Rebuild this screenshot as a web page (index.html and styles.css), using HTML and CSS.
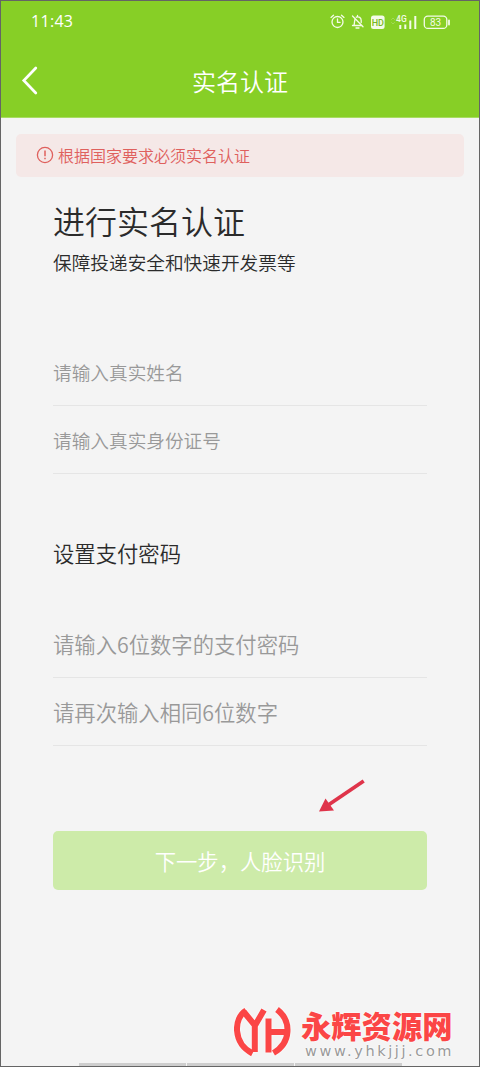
FILE: index.html
```html
<!DOCTYPE html>
<html lang="zh-CN">
<head>
<meta charset="utf-8">
<title>实名认证</title>
<link rel="stylesheet" href="styles.css">
</head>
<body>
<div class="screen">
  <header class="header">
    <div class="status">
      <span class="time">11:43</span>
      <div class="status-icons">
        <svg width="130" height="20" viewBox="0 0 130 20" fill="none" stroke="#f4fbe8" stroke-width="1.3" stroke-linecap="round">
          <circle cx="7.5" cy="11" r="5.5"/><path d="M7.5 8v3.300h2.600M1 6.400 3.500 4.200M14 6.400l-2.500-2.200"/>
          <path d="M22.500 14.500h9.500M24 14c.7-1.500.2-4.500 1.300-6.300M26.300 6.200c2.500-1.200 4.900.6 4.900 3.300v2M27.500 5.500v-1M26 17h3M22.500 5l10.500 10.800"/>
          <rect x="41" y="4.500" width="13.600" height="13.500" rx="2.500" fill="#f4fbe8" stroke="none"/>
          <path d="M70.300 18v-4M75.300 18v-4.500M80.300 18V9.500M85.300 18V5" stroke-width="2" stroke-linecap="butt"/>
          <path d="M61.500 8.500 63 7l1.500 1.500M61.500 11.500l1.500 1.500 1.500-1.500" stroke-width="1" opacity=".25"/>
          <rect x="94.300" y="5.100" width="22.500" height="12.300" rx="3.500"/>
          <path d="M119 9.500v4" stroke-width="1.800"/>
          <text class="icon-text hd" x="47.800" y="14.800">HD</text>
          <text class="icon-text net" x="71.400" y="11">4G</text>
          <text class="icon-text level" x="105.500" y="14.900">83</text>
        </svg>
      </div>
    </div>
    <div class="nav">
      <svg class="back" width="18" height="30" viewBox="0 0 18 30" fill="none" stroke="#fff" stroke-width="2.700" stroke-linecap="round"><path d="M14.800 2 2.800 14.500l12 12.500"/></svg>
      <h1 class="title">实名认证</h1>
    </div>
  </header>

  <div class="alert">
    <svg width="18" height="18" viewBox="0 0 18 18" fill="none" stroke="#df605d" stroke-width="1.300"><circle cx="9" cy="9" r="7.600"/><path d="M9 4.500v5.700M9 11.800v1.500" stroke-width="1.500"/></svg>
    <span>根据国家要求必须实名认证</span>
  </div>

  <main class="form">
    <h2 class="heading">进行实名认证</h2>
    <p class="subtitle">保障投递安全和快速开发票等</p>
    <div class="fields identity">
      <div class="field">请输入真实姓名</div>
      <div class="field">请输入真实身份证号</div>
    </div>
    <h3 class="section">设置支付密码</h3>
    <div class="fields password">
      <div class="field">请输入6位数字的支付密码</div>
      <div class="field">请再次输入相同6位数字</div>
    </div>
    <svg class="arrow" width="50" height="36" viewBox="0 0 50 36"><path d="M45.700 3 11 26.500" stroke="#df344a" stroke-width="3.800" fill="none"/><path d="M1 33.500 7.500 20.500l8.500 12z" fill="#df344a"/></svg>
    <button class="next">下一步，人脸识别</button>
  </main>

  <div class="dock"><i></i><i></i><i></i></div>

  <div class="watermark">
    <svg width="58" height="52" viewBox="0 0 58 52" fill="none" stroke="#fb4646" stroke-width="6">
      <path d="M12 4.500C-.5 12-1.500 37 18.500 47.500M43 3.500C58 15 57 37 39.500 47"/>
      <path d="M9.500 5.500 21 19.500 30 4M20.800 18v28M34.500 12.500v34M34.500 26h18"/>
    </svg>
    <div class="brand">
      <div class="brand-name">永辉资源网</div>
      <div class="brand-url">www.yhkjjj.com</div>
    </div>
  </div>
</div>
</body>
</html>
```
FILE: styles.css
```css
* { box-sizing: border-box; margin: 0; padding: 0; }
body { font-family: "Noto Sans CJK SC", sans-serif; font-weight: 350; background: #f4f4f4; }
svg { display: block; flex: none; }
h1, h2, h3 { font-weight: 350; }
.screen {
  position: relative;
  display: flex;
  flex-direction: column;
  width: 480px;
  height: 1067px;
  overflow: hidden;
  border: 1px solid #656565;
  background: #f4f4f4;
}
.header { height: 117px; background: #87cf26; color: #fff; border-bottom: 1px solid #a8dc62; }
.status { display: flex; justify-content: space-between; height: 40px; padding: 10px 19px 0 30px; }
.time { font: 400 16px/20px "Open Sans", sans-serif; letter-spacing: .3px; }
.icon-text { fill: #f4fbe8; stroke: none; text-anchor: middle; font-family: Roboto, sans-serif; font-weight: 500; }
.hd { font-size: 9px; fill: #77b922; }
.net { font-size: 8.500px; }
.level { font-size: 10px; font-weight: 400; }
.nav { display: flex; align-items: center; height: 80px; padding-left: 20px; }
.back { width: 18px; }
.title { flex: 1; margin-right: 38px; text-align: center; font-size: 24px; line-height: 36px; }
.alert {
  display: flex;
  align-items: center;
  gap: 4px;
  height: 43px;
  margin: 16px 15px 0;
  padding: 0 20px 2px;
  border-radius: 5px;
  background: #f5e8e7;
  color: #df605d;
  font-size: 16px;
}
.form { display: flex; flex-direction: column; margin: 21px 52px 0; color: #2b2b2b; }
.heading { font-size: 32px; line-height: 44px; }
.subtitle { margin-top: 6px; font-size: 18.670px; line-height: 28px; }
.fields { color: #999; }
.field { height: 68px; border-bottom: 1px solid #e5e5e5; line-height: 67px; white-space: nowrap; }
.identity { margin-top: 62px; font-size: 18.670px; }
.section { margin-top: 63px; font-size: 21.330px; line-height: 32px; }
.password { margin-top: 41px; font-size: 21.330px; }
.arrow { margin: 32px 0 0 265px; }
.next {
  height: 59px;
  margin-top: 17px;
  padding-bottom: 1px;
  border: 0;
  border-radius: 5px;
  background: #cdeba9;
  color: #fff;
  font-family: inherit;
  font-size: 21.330px;
  font-weight: 350;
}
.dock { display: flex; gap: 1px; width: 323px; height: 3px; margin: auto 0 0 78px; }
.dock i { flex: 1; background: #cecece; }
.watermark { position: absolute; left: 233px; top: 1005px; display: flex; gap: 9px; }
.watermark svg { filter: drop-shadow(0 0 1px #fff); }
.brand-name {
  padding-top: 4px;
  color: #fb4646;
  font-size: 30.300px;
  font-weight: 900;
  line-height: 31px;
  text-shadow: 0 0 2px #fff, 0 0 2px #fff;
}
.brand-url {
  margin: 3px 0 0 4px;
  color: #999;
  font: 14.500px/15px "DejaVu Sans", sans-serif;
  letter-spacing: 2.600px;
  text-shadow: 0 0 2px #fff, 0 0 2px #fff;
}
```
